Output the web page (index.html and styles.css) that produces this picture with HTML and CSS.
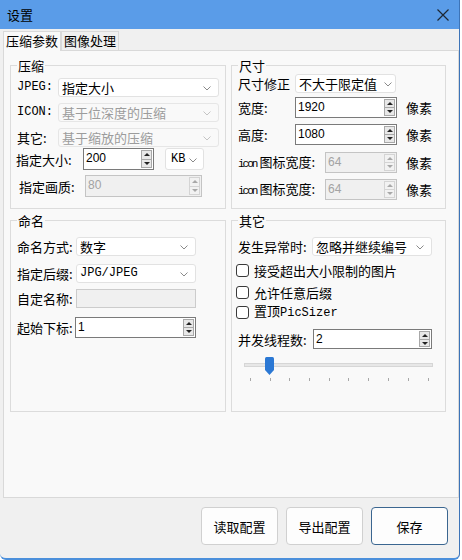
FILE: index.html
```html
<!DOCTYPE html>
<html lang="zh-CN">
<head>
    <meta charset="UTF-8">
    <title>设置</title>
    <link rel="stylesheet" href="styles.css">
</head>
<body>
<div class="window">
    <div class="titlebar">
        <span class="title">设置</span>
        <svg class="close" width="12" height="12" viewBox="0 0 12 12"><path d="M0.5 0.5 L11.5 11.5 M11.5 0.5 L0.5 11.5" stroke="#1d2733" stroke-width="1.2"/></svg>
    </div>

    <div class="tabs">
        <div class="tab active">压缩参数</div>
        <div class="tab">图像处理</div>
    </div>

    <div class="panel">
        <div class="groups">
            <!-- 压缩 -->
            <fieldset class="group">
                <legend>压缩</legend>
                <div class="row mt5">
                    <span class="lbl mono w41">JPEG:</span>
                    <div class="combo w161">指定大小<svg class="chev" width="8" height="5" viewBox="0 0 8 5"><path d="M0.5 0.5 L4 4 L7.5 0.5" fill="none" stroke="#8a8a8a"/></svg></div>
                </div>
                <div class="row mt6">
                    <span class="lbl mono w41">ICON:</span>
                    <div class="combo disabled w161">基于位深度的压缩<svg class="chev" width="8" height="5" viewBox="0 0 8 5"><path d="M0.5 0.5 L4 4 L7.5 0.5" fill="none" stroke="#c4c4c4"/></svg></div>
                </div>
                <div class="row mt6">
                    <span class="lbl w41">其它:</span>
                    <div class="combo disabled w161">基于缩放的压缩<svg class="chev" width="8" height="5" viewBox="0 0 8 5"><path d="M0.5 0.5 L4 4 L7.5 0.5" fill="none" stroke="#c4c4c4"/></svg></div>
                </div>
                <div class="row mt1 tall">
                    <span class="lbl w67 shift-l">指定大小:</span>
                    <div class="spin w71"><span class="val">200</span><span class="btns"></span></div>
                    <div class="combo w39 kb"><span class="mono">KB</span><svg class="chev" width="8" height="5" viewBox="0 0 8 5"><path d="M0.5 0.5 L4 4 L7.5 0.5" fill="none" stroke="#8a8a8a"/></svg></div>
                </div>
                <div class="row mt5 tall">
                    <span class="lbl w66 shift-r">指定画质:</span>
                    <div class="spin disabled w117"><span class="val">80</span><span class="btns"></span></div>
                </div>
            </fieldset>

            <!-- 尺寸 -->
            <fieldset class="group">
                <legend>尺寸</legend>
                <div class="row mt1">
                    <span class="lbl w57">尺寸修正</span>
                    <div class="combo w101 tight">不大于限定值<svg class="chev" width="8" height="5" viewBox="0 0 8 5"><path d="M0.5 0.5 L4 4 L7.5 0.5" fill="none" stroke="#8a8a8a"/></svg></div>
                </div>
                <div class="row mt4 mid">
                    <span class="lbl w57">宽度:</span>
                    <div class="spin w102"><span class="val">1920</span><span class="btns"></span></div>
                    <span class="unit">像素</span>
                </div>
                <div class="row mt6 mid">
                    <span class="lbl w57">高度:</span>
                    <div class="spin w102"><span class="val">1080</span><span class="btns"></span></div>
                    <span class="unit">像素</span>
                </div>
                <div class="row mt7 mid">
                    <span class="lbl w87"><span class="mono small">icon</span>图标宽度:</span>
                    <div class="spin disabled w72"><span class="val">64</span><span class="btns"></span></div>
                    <span class="unit">像素</span>
                </div>
                <div class="row mt6 mid">
                    <span class="lbl w87"><span class="mono small">icon</span>图标宽度:</span>
                    <div class="spin disabled w72"><span class="val">64</span><span class="btns"></span></div>
                    <span class="unit">像素</span>
                </div>
            </fieldset>

            <!-- 命名 -->
            <fieldset class="group">
                <legend>命名</legend>
                <div class="row mt9">
                    <span class="lbl w59">命名方式:</span>
                    <div class="combo w120">数字<svg class="chev" width="8" height="5" viewBox="0 0 8 5"><path d="M0.5 0.5 L4 4 L7.5 0.5" fill="none" stroke="#8a8a8a"/></svg></div>
                </div>
                <div class="row mt8">
                    <span class="lbl w59">指定后缀:</span>
                    <div class="combo w120"><span class="mono">JPG/JPEG</span><svg class="chev" width="8" height="5" viewBox="0 0 8 5"><path d="M0.5 0.5 L4 4 L7.5 0.5" fill="none" stroke="#8a8a8a"/></svg></div>
                </div>
                <div class="row mt6">
                    <span class="lbl w59">自定名称:</span>
                    <div class="textbox disabled w120"></div>
                </div>
                <div class="row mt9 mid">
                    <span class="lbl w58">起始下标:</span>
                    <div class="spin w121"><span class="val">1</span><span class="btns"></span></div>
                </div>
            </fieldset>

            <!-- 其它 -->
            <fieldset class="group">
                <legend>其它</legend>
                <div class="row mt9">
                    <span class="lbl w74">发生异常时:</span>
                    <div class="combo w120">忽略并继续编号<svg class="chev" width="8" height="5" viewBox="0 0 8 5"><path d="M0.5 0.5 L4 4 L7.5 0.5" fill="none" stroke="#8a8a8a"/></svg></div>
                </div>
                <label class="check mt5"><span class="box"></span><span class="txt">接受超出大小限制的图片</span></label>
                <label class="check mt4"><span class="box"></span><span class="txt">允许任意后缀</span></label>
                <label class="check mt2"><span class="box"></span><span class="txt">置顶<span class="mono">PicSizer</span></span></label>
                <div class="row mt8 mid2">
                    <span class="lbl w75">并发线程数:</span>
                    <div class="spin w119"><span class="val">2</span><span class="btns"></span></div>
                </div>
                <svg class="slider" width="196" height="28" viewBox="0 0 196 28">
                    <rect x="4.5" y="8.5" width="188" height="3" fill="#e7e7e7" stroke="#d6d6d6"/>
                    <path d="M25 3.5 Q25 2 26.5 2 H32.5 Q34 2 34 3.5 V15 L29.5 20 L25 15 Z" fill="#2b78d4"/>
                    <g stroke="#a8a8a8">
                        <path d="M10.5 23 V26 M30.5 23 V26 M49.5 23 V26 M69.5 23 V26 M89.5 23 V26 M108.5 23 V26 M128.5 23 V26 M148.5 23 V26 M168.5 23 V26 M188.5 23 V26"/>
                    </g>
                </svg>
            </fieldset>
        </div>
    </div>

    <div class="footer">
        <button class="btn">读取配置</button>
        <button class="btn">导出配置</button>
        <button class="btn primary">保存</button>
    </div>
</div>
</body>
</html>
```

FILE: styles.css
```css
* {
    box-sizing: border-box;
}
body {
    margin: 0;
    background: #ffffff;
    font-family: "Noto Sans CJK SC", sans-serif;
    font-size: 13px;
    color: #000;
}
.window {
    width: 460px;
    height: 560px;
    background: #f0f0f0;
    display: flex;
    flex-direction: column;
    border-right: 1px solid #3d74b8;
    border-bottom: 2px solid #4b8fdb;
    border-bottom-left-radius: 6px;
    border-bottom-right-radius: 6px;
    overflow: hidden;
}
.titlebar {
    height: 29px;
    flex-shrink: 0;
    background: #5a9ce8;
    display: flex;
    align-items: center;
    justify-content: space-between;
    padding: 0 10px 0 7px;
}
.title {
    font-size: 13px;
    line-height: 15px;
}
.tabs {
    display: flex;
    height: 19px;
    margin-top: 2px;
    padding-left: 3px;
}
.tab {
    font-size: 13px;
    line-height: 18px;
    height: 19px;
    padding: 0 2px;
    white-space: nowrap;
    border: 1px solid #d9d9d9;
    border-bottom: none;
    background: #f0f0f0;
}
.tab.active {
    height: 20px;
    background: #f9f9f9;
    position: relative;
    z-index: 1;
}
.panel {
    height: 448px;
    margin-left: 3px;
    border: 1px solid #d9d9d9;
    background: #f9f9f9;
    padding: 7px 0 0 6px;
}
.groups {
    display: grid;
    grid-template-columns: 216px 215px;
    grid-template-rows: 151px 199px;
    column-gap: 5px;
    row-gap: 4px;
}
.group {
    margin: 0;
    min-width: 0;
    padding: 0 6px 0 6px;
    border: 1px solid #dcdcdc;
    display: flex;
    flex-direction: column;
}
.group legend {
    padding: 0 1px;
    margin-left: 0;
    line-height: 15px;
    height: 15px;
    font-size: 13px;
}

/* rows */
.row {
    display: flex;
    align-items: center;
    height: 19px;
}
.row.tall {
    height: 22px;
}
.row.mid {
    height: 21px;
}
.row.mid2 {
    height: 20px;
}
.mt1 { margin-top: 1px; }
.mt2 { margin-top: 2px; }
.mt4 { margin-top: 4px; }
.mt5 { margin-top: 5px; }
.mt6 { margin-top: 6px; }
.mt7 { margin-top: 7px; }
.mt8 { margin-top: 8px; }
.mt9 { margin-top: 9px; }

.lbl {
    flex-shrink: 0;
    white-space: nowrap;
    line-height: 15px;
}
.shift-l { margin-left: -1px; }
.shift-r { margin-left: 2px; }
.mono {
    font-family: "Liberation Mono", monospace;
    font-size: 12px;
}
.mono.small {
    font-size: 11px;
    letter-spacing: -2px;
    margin-right: 3px;
}
.w39 { width: 39px; }
.w41 { width: 41px; }
.w57 { width: 57px; }
.w58 { width: 58px; }
.w59 { width: 59px; }
.w66 { width: 66px; }
.w67 { width: 67px; }
.w71 { width: 71px; }
.w72 { width: 72px; }
.w74 { width: 74px; }
.w75 { width: 75px; }
.w87 { width: 87px; }
.w101 { width: 101px; }
.w102 { width: 102px; }
.w117 { width: 117px; }
.w119 { width: 119px; }
.w120 { width: 120px; }
.w121 { width: 121px; }
.w161 { width: 161px; }

/* combo boxes */
.combo {
    height: 19px;
    background: #fff;
    border: 1px solid #e2e2e2;
    border-radius: 3px;
    padding: 0 0 0 3px;
    display: flex;
    align-items: center;
    position: relative;
    line-height: 15px;
    white-space: nowrap;
}
.combo .chev {
    position: absolute;
    right: 7px;
    top: 7px;
}
.combo.tight .chev {
    right: 3px;
}
.combo.disabled {
    background: #f9f9f9;
    border-color: #e6e6e6;
    color: #9c9c9c;
}
.combo.kb {
    margin-left: 11px;
    height: 22px;
    padding-left: 5px;
}
.combo.kb .chev {
    top: 9px;
    right: 6px;
}

.textbox {
    height: 19px;
    border: 1px solid #cfcfcf;
    background: #fff;
}
.textbox.disabled {
    background: #f0f0f0;
    border-color: #cccccc;
}

/* spin boxes */
.spin {
    height: 100%;
    border: 1px solid #7a7a7a;
    background: #fff;
    display: flex;
    align-items: center;
    justify-content: space-between;
    padding: 1px 1px 1px 2px;
}
.spin .val {
    font-family: "Liberation Sans", Arial, sans-serif;
    font-size: 12px;
    line-height: 14px;
    align-self: flex-start;
    margin-top: 1px;
}
.spin .btns {
    width: 11px;
    height: 100%;
    border: 1px solid #a8a8a8;
    background:
        linear-gradient(#a8a8a8, #a8a8a8) 0 50% / 100% 1px no-repeat,
        #e8e8e8;
    position: relative;
}
.spin .btns::before,
.spin .btns::after {
    content: "";
    position: absolute;
    left: 2px;
    border-left: 3px solid transparent;
    border-right: 3px solid transparent;
}
.spin .btns::before {
    top: 25%;
    margin-top: -2px;
    border-bottom: 3px solid #222;
}
.spin .btns::after {
    bottom: 25%;
    margin-bottom: -2px;
    border-top: 3px solid #222;
}
.spin.disabled {
    border-color: #c4c4c4;
    background: #f0f0f0;
    color: #a3a3a3;
}
.spin.disabled .btns {
    border-color: #d4d4d4;
    background:
        linear-gradient(#d4d4d4, #d4d4d4) 0 50% / 100% 1px no-repeat,
        #f2f2f2;
}
.spin.disabled .btns::before {
    border-bottom-color: #a8a8a8;
}
.spin.disabled .btns::after {
    border-top-color: #a8a8a8;
}
.unit {
    margin-left: 9px;
    line-height: 15px;
}

/* checkboxes */
.check {
    display: flex;
    align-items: center;
    height: 18px;
    margin-left: -2px;
    white-space: nowrap;
}
.check .txt {
    line-height: 15px;
}
.check .box {
    width: 13px;
    height: 13px;
    border: 1px solid #3a3a3a;
    border-radius: 3px;
    background: #fff;
    margin-right: 5px;
    flex-shrink: 0;
}

.slider {
    margin-top: 6px;
    margin-left: 2px;
    display: block;
}

/* footer buttons */
.footer {
    flex: 1;
    display: flex;
    justify-content: flex-end;
    align-items: flex-start;
    gap: 8px;
    padding: 9px 11px 0 0;
}
.btn {
    width: 77px;
    height: 38px;
    background: #fdfdfd;
    border: 1px solid #d0d0d0;
    border-radius: 4px;
    font-family: "Noto Sans CJK SC", sans-serif;
    font-size: 13px;
    color: #000;
    padding: 0;
}
.btn.primary {
    border: 1px solid #3b6690;
}
```
